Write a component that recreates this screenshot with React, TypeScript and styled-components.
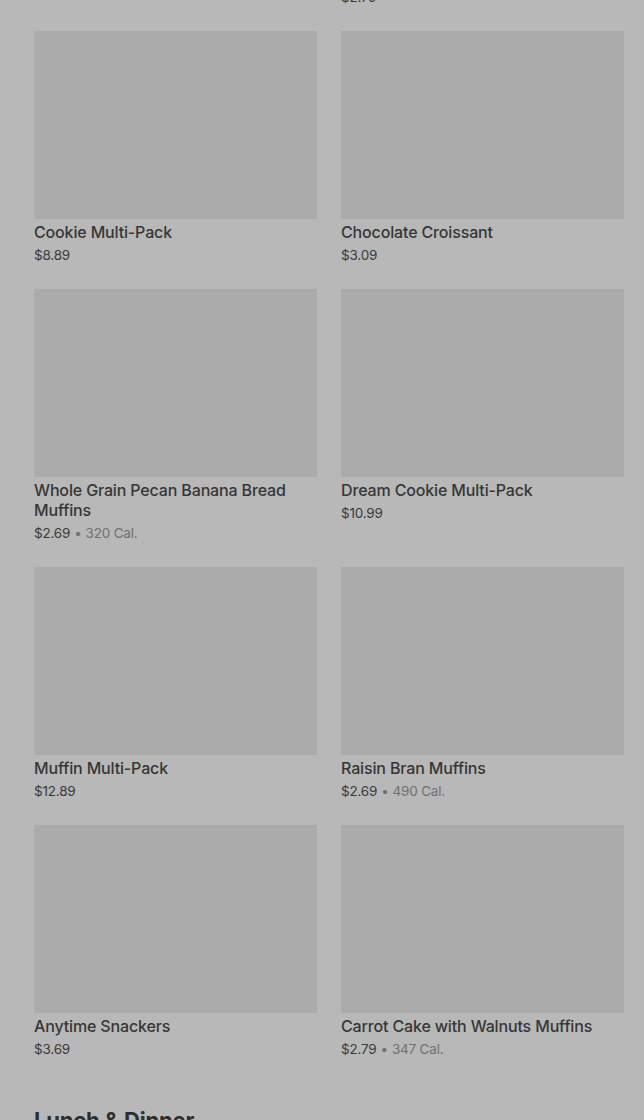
import React from 'react';
import styled, { createGlobalStyle } from 'styled-components';

interface Item {
  id: string;
  name: string;
  price?: string;
  calories?: number;
}

const GlobalStyle = createGlobalStyle`
  html, body {
    margin: 0;
    padding: 0;
    overflow: hidden;
    background: #b8b8b8;
  }
  body {
    font-family: Inter, "Noto Sans", "Liberation Sans", sans-serif;
    -webkit-font-smoothing: antialiased;
  }
`;

const Page = styled.div`
  padding: 0 20px 0 34px;
  margin-top: -227px;
`;

const Grid = styled.div`
  display: grid;
  grid-template-columns: 1fr 1fr;
  column-gap: 24px;
  row-gap: 25px;
`;

const Card = styled.div`
  display: flex;
  flex-direction: column;
  min-width: 0;
`;

const Thumb = styled.div`
  height: 188px;
  background: #ababab;
`;

const Name = styled.div`
  margin-top: 3px;
  font-size: 16px;
  line-height: 20px;
  font-weight: 500;
  color: #363636;
  letter-spacing: -0.15px;
`;

const Meta = styled.div`
  margin-top: 4px;
  font-size: 13.5px;
  line-height: 18px;
  color: #3a3a3a;
  letter-spacing: -0.2px;
`;

const Calories = styled.span`
  color: #707070;
`;

const Dot = styled.span`
  color: #707070;
  margin: 0 4px;
`;

const SectionTitle = styled.h2`
  margin: 46px 0 0;
  font-size: 22px;
  line-height: 32px;
  font-weight: 700;
  color: #2e2e2e;
  letter-spacing: -0.2px;
`;

const items: Item[] = [
  { id: 'p1', name: 'Banana Nut Muffin' },
  { id: 'p2', name: 'Blueberry Muffin', price: '$2.79' },
  { id: '1', name: 'Cookie Multi-Pack', price: '$8.89' },
  { id: '2', name: 'Chocolate Croissant', price: '$3.09' },
  { id: '3', name: 'Whole Grain Pecan Banana Bread Muffins', price: '$2.69', calories: 320 },
  { id: '4', name: 'Dream Cookie Multi-Pack', price: '$10.99' },
  { id: '5', name: 'Muffin Multi-Pack', price: '$12.89' },
  { id: '6', name: 'Raisin Bran Muffins', price: '$2.69', calories: 490 },
  { id: '7', name: 'Anytime Snackers', price: '$3.69' },
  { id: '8', name: 'Carrot Cake with Walnuts Muffins', price: '$2.79', calories: 347 },
];

const App: React.FC = () => {
  return (
    <>
      <GlobalStyle />
      <Page>
        <Grid>
          {items.map((item) => (
            <Card key={item.id}>
              <Thumb />
              <Name>{item.name}</Name>
              {item.price && (
                <Meta>
                  {item.price}
                  {item.calories && (
                    <>
                      <Dot>•</Dot>
                      <Calories>{item.calories} Cal.</Calories>
                    </>
                  )}
                </Meta>
              )}
            </Card>
          ))}
        </Grid>
        <SectionTitle>Lunch &amp; Dinner</SectionTitle>
      </Page>
    </>
  );
};

export default App;
